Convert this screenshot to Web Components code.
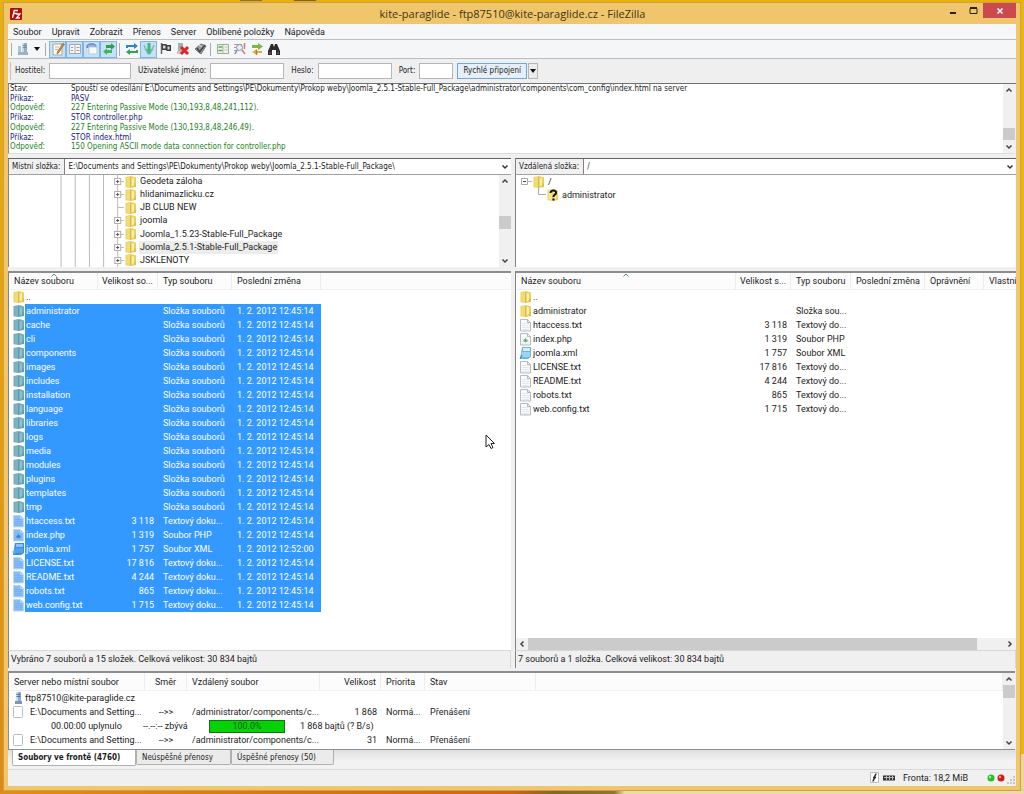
<!DOCTYPE html>
<html lang="cs">
<head>
<meta charset="utf-8">
<title>kite-paraglide - ftp87510@kite-paraglide.cz - FileZilla</title>
<style>
  html { height: 100%; }
  body {
    margin: 0; min-height: 100vh; display: flex; overflow: hidden;
    --ui: Roboto, "Noto Sans", sans-serif;
    --dlg: "DejaVu Sans Condensed", "DejaVu Sans", sans-serif;
    --dlg-size: 8px;
    --line: #8b8d91;
    --face: #f0f0f0;
    font: 9px/14px var(--ui); color: #1c1c1c;
    background:
      linear-gradient(90deg, #0000 240px, #8a7040 240px 262px, #0000 262px 294px, #7a6038 294px 316px, #0000 316px) top / 100% 1px no-repeat,
      linear-gradient(90deg, #dc9018, #c86818 50%, #8a6430 54%, #96703c 60%, #f0d9a8 61%) bottom / 100% 3px no-repeat,
      linear-gradient(180deg, #e8b60c 95%, #ecd49c 95%) right / 4px 100% no-repeat,
      linear-gradient(180deg, #e6b010, #e2a00e 50%, #dd8a14);
  }
  fz-window { flex: 1; margin: 2px 3px 3px; }
</style>
</head>
<body>
<fz-window>
  <fz-titlebar slot="chrome">kite-paraglide - ftp87510@kite-paraglide.cz - FileZilla</fz-titlebar>
  <fz-menubar slot="chrome"></fz-menubar>
  <fz-toolbar slot="chrome"></fz-toolbar>
  <fz-quickconnect slot="chrome"></fz-quickconnect>
  <fz-log slot="log"></fz-log>
  <fz-pane slot="local" side="local"></fz-pane>
  <fz-pane slot="remote" side="remote"></fz-pane>
  <fz-queue slot="queue"></fz-queue>
  <fz-statusbar slot="queue"></fz-statusbar>
</fz-window>
<fz-pointer></fz-pointer>

<script>
const define = (name, render) => customElements.define(name, class extends HTMLElement {
  connectedCallback() {
    if (this.shadowRoot) return;
    const t = document.createElement('template');
    t.innerHTML = render(this);
    this.attachShadow({ mode: 'open' }).append(t.content.cloneNode(true));
  }
});

/* ---------- icons ---------- */
const folder = (a, b, c, d) => `<path d="M1.500 2 7 1l5 1.500V12l-5 1-5.500-.800z" fill="${a}"/><path d="M2.500 2.500 6 2v10l-3.500-.500z" fill="${b}"/><path d="M7.500 3l2.500.5V10l-2.500 1.500z" fill="${c}"/><path d="M6.700 2.500v10" stroke="${d}" stroke-width=".6"/><path d="M11 8.500v3.500" stroke="${d}" stroke-width=".6"/>`;
const page = (fill, line, ink) => `<path d="M1.500 1.500h7l3 3v8.500h-10z" fill="${fill}" stroke="${line}"/><path d="M8.500 1.500v3h3" fill="none" stroke="${line}"/><path d="M3 5.500h7M3 7.500h7M3 9.500h7M3 11.500h7" stroke="${ink}"/>`;
const ICONS = {
  logo: [12, `<rect width="12" height="12" rx="1" fill="#b30c0c"/><path d="M2.500 10 4.200 2.500H8M3.500 5.500H7M6 6h4L6.500 10H10" fill="none" stroke="#fff" stroke-width="1.300"/>`],
  folder: [14, folder('#e9d062', '#f2dc74', '#fbf0a8', '#c2a032')],
  folderSel: [14, folder('#6fa9bb', '#7fb4be', '#92c2c8', '#4a86a4')],
  folderUnknown: [14, folder('#ecd468', '#f6e58c', '#fbf0a8', '#dcc060') + `<path d="M4.500 5c0-3.500 6-3.300 5.500 0-.3 1.800-2.500 2-2.500 4M7.500 10.500v2" fill="none" stroke="#111" stroke-width="2"/>`],
  file: [14, page('#f8fafc', '#b4bac4', '#e2e8ef')],
  fileSel: [14, page('#86bbf6', '#bcd8f6', '#78b0f0')],
  php: [14, page('#f8fafc', '#b4bac4', '#edf1f5') + `<path d="M4 9 6.500 6l2.500 3-2.500 1.500z" fill="#6fb46f"/>`],
  phpSel: [14, page('#86bbf6', '#bcd8f6', '#80b5f3') + `<path d="M4 9 6.500 6l2.500 3-2.500 1.500z" fill="#3d84cf"/>`],
  xml: [14, `<path d="M3 1h9v10l-3 2H1z" fill="#6fb7de"/><path d="M4 2h7v3H4z" fill="#d8eefa"/><path d="M3 6h8v5H2z" fill="#9ad4ee"/><path d="M1 13l2-4" stroke="#2f7fae"/>`],
  xmlSel: [14, `<path d="M3 1h9v10l-3 2H1z" fill="#3a8ade"/><path d="M4 2h7v3H4z" fill="#8cc4f6"/><path d="M3 6h8v5H2z" fill="#4fa2ee"/><path d="M0 10l3-2v4z" fill="#58b8f0"/>`],
  blank: [14, `<rect x="1.500" y="1.500" width="9" height="11" rx="1" fill="#fff" stroke="#b9bcc4"/>`],
  tower: [14, `<path d="M4 1h5v9H4z" fill="#88aed2"/><path d="M4 1h2v9H4z" fill="#c9ddf0"/><path d="M4.500 3.500h4M4.500 5.500h4" stroke="#49749f"/><path d="M3 10h7v3H3z" fill="#7d97ad"/>`],
  sites: [14, `<path d="M6 1h5v10H6z" fill="#8fb2c8"/><path d="M6 1h2v10H6z" fill="#c3d9e6"/><path d="M2 4h3v6H2z" fill="#a8c6d8"/><path d="M2 10h10v3H2z" fill="#9fb2bc"/><path d="M7 3.500h4M7 5.500h4" stroke="#6a8ea8"/>`],
  note: [14, `<path d="M2 2h9v11H2z" fill="#fbf8ec" stroke="#a9a9a0"/><path d="M4 5h4M4 7.500h3" stroke="#b8bcc4"/><path d="M12 1 6.500 9.500 6 12l2-1.500L13.500 2z" fill="#c98a3c" stroke="#8a5a24" stroke-width=".5"/>`],
  split: [14, `<path d="M1.500 2.500h11v9h-11z" fill="#f4f4f2" stroke="#a4a8b0"/><path d="M7 3v8" stroke="#a4a8b0"/><path d="M3 5.500h2M3 8.500h2" stroke="#8f9aa8"/><path d="M8.500 5.500h3M8.500 8.500h3" stroke="#d88a70"/>`],
  fold: [14, `<path d="M2 6V4c0-3 9-3 9 0v2" fill="#8aaede" stroke="#4a78b8"/><path d="M4 5h8v7H4z" fill="#f6f8fa" stroke="#c0c8d4"/>`],
  queue: [14, `<path d="M4 3h5V1l4 3.500L9 8V6H4z" fill="#2ea24a"/><path d="M10 8H5V6.500L1 9.500 5 13v-2h5z" fill="#3fb85c"/>`],
  refresh: [14, `<path d="M1 6V3h8V1l4 3-4 3V5H3v1z" fill="#2a86c8"/><path d="M13 8v3H5v2L1 10l4-3v2h6V8z" fill="#2fa54e"/>`],
  process: [14, `<path d="M5.500 1h3v6h3L7 13 2.500 7h3z" fill="#45b87a"/><path d="M2 3l4 9M12 3 8 12" stroke="#7bc0a8" stroke-width="1.500"/>`],
  flag: [14, `<path d="M2.500 1v11" stroke="#666" stroke-width="1.500"/><path d="M3 2h4l1 1h4v6H8L7 8H3z" fill="#3b3b3b"/><path d="M4 3.500h2.500v3H4zM8.500 4.500h2v3h-2z" fill="#d8d8d8"/>`],
  cancel: [14, `<path d="M2 1h5v8H2z" fill="#a4aeb6"/><path d="M1 9h6v3H1z" fill="#c0c6cc"/><path d="M5 5l7 7M12 5l-7 7" stroke="#dc2626" stroke-width="3"/>`],
  verify: [14, `<path d="M2 7 8 2l5 2-5 8z" fill="#9b9b9b" stroke="#777"/><path d="M4 6l2.500 4L12 3" fill="none" stroke="#444" stroke-width="1.500"/><path d="M6 3.500l3 1" stroke="#ddd"/>`],
  compare: [14, `<path d="M1.500 2.500h11v9h-11z" fill="#eef4ea" stroke="#9caa98"/><path d="M7 3v8" stroke="#b4c0b0"/><path d="M2.500 5h4M2.500 8.500h4" stroke="#4fb05a" stroke-width="1.500"/><path d="M8.500 5h3M8.500 8h3" stroke="#b8c8b4"/>`],
  filter: [14, `<path d="M1 2.500h8M1 5.500h3M1 8.500h3" stroke="#c09090"/><circle cx="6.500" cy="5.500" r="3" fill="#e8eef6" stroke="#8496aa"/><path d="M4 8l-2 4" stroke="#889" stroke-width="1.500"/><path d="M11.500 1v6M9 8l3 4" stroke="#d87a7a" stroke-width="1.500"/>`],
  sync: [14, `<path d="M2 3h6V1l5 3.500L8 8V6H2z" fill="#7ab648"/><path d="M12 9H7V7L2 10l5 3v-2h5z" fill="#e0b23c"/><path d="M6.500 8v5" stroke="#c07a3a" stroke-width="1.500"/>`],
  find: [14, `<path d="M4 2h2l1 3 1-3h2l3 7v4H9V8H5v5H1V9z" fill="#2b2b2b"/><path d="M2 10h2v2H2zM10 10h2v2h-2z" fill="#8b3b3b"/>`],
};
define('fz-icon', el => {
  const [box, art] = ICONS[el.getAttribute('name')];
  return `<style>:host{display:inline-block;width:${box}px;height:${box}px;flex:none}svg{display:block;width:100%;height:100%}</style>
  <svg viewBox="0 0 ${box} ${box}" aria-hidden="true">${art}</svg>`;
});

/* ---------- frame ---------- */
define('fz-window', () => `<style>
  :host{display:flex;flex-direction:column;box-sizing:border-box;background:#f0c66c;border:1px solid #cf9f40;padding:0 4px 4px;min-width:0}
  .client{flex:1;display:flex;flex-direction:column;min-height:0;background:var(--face)}
  .panes{flex:1;display:grid;grid-template-columns:503fr 501fr;gap:4px;min-height:0}
  ::slotted([slot=local]),::slotted([slot=remote]){min-width:0;min-height:0}
</style>
<slot name="chrome"></slot>
<div class="client"><slot name="log"></slot>
  <div class="panes"><slot name="local"></slot><slot name="remote"></slot></div>
  <slot name="queue"></slot></div>`);

define('fz-titlebar', () => `<style>
  :host{display:flex;align-items:center;height:21px;font-family:"Open Sans","Noto Sans",sans-serif;font-size:11px;color:#3f3313}
  fz-icon{margin-left:2px}
  h1{flex:1;margin:0;font:inherit;text-align:center;padding-left:60px}
  .ctl{display:flex;align-self:flex-start}
  button{all:unset;width:20px;height:15px;display:grid;place-items:center}
  button svg{display:block}
  .close{width:33px;background:#cb4a4e}
</style>
<fz-icon name="logo"></fz-icon><h1><slot></slot></h1>
<div class="ctl">
  <button aria-label="Minimalizovat"><svg width="8" height="8"><path d="M1 6h6" stroke="#2a2008" stroke-width="2"/></svg></button>
  <button aria-label="Maximalizovat"><svg width="9" height="8"><path d="M1 1.500h7v5H1z" fill="none" stroke="#2a2008"/><path d="M1 1h7" stroke="#2a2008" stroke-width="2"/></svg></button>
  <button class="close" aria-label="Zavřít"><svg width="8" height="8"><path d="M1.500 1.500l5 5M6.500 1.500l-5 5" stroke="#fff" stroke-width="1.500"/></svg></button>
</div>`);

define('fz-menubar', () => `<style>
  :host{display:flex;gap:10px;height:15px;padding-left:5px;background:#f6f7f9;border-bottom:1px solid #b9bec4}
  button{all:unset;line-height:16px}
</style>` + ['Soubor','Upravit','Zobrazit','Přenos','Server','Oblíbené položky','Nápověda'].map(t => `<button>${t}</button>`).join(''));

define('fz-toolbar', () => {
  const b = (name, label, on) => `<button aria-label="${label}"${on ? ' class="on" aria-pressed="true"' : ''}><fz-icon name="${name}"></fz-icon></button>`;
  return `<style>
  :host{display:flex;align-items:center;height:18px;padding-left:3px;background:#f5f6f8;border-bottom:1px solid #b9bec4}
  button{all:unset;box-sizing:border-box;width:17px;height:17px;display:grid;place-items:center}
  .on{background:#c6e0f7;border:1px solid #7fb4e4}
  i{width:1px;height:13px;background:#a8abb0;margin:0 2px 0 0}
  i.s{margin:0 3px 0 2px}
  .drop{width:12px}
</style><i></i>${b('sites','Správce míst')}
<button class="drop" aria-label="Místa"><svg width="7" height="4"><path d="M0 0h6L3 4z" fill="#111"/></svg></button>
<i class="s"></i>
${b('note','Protokol',1)}${b('split','Místní strom',1)}${b('fold','Vzdálený strom',1)}${b('queue','Fronta',1)}<i class="s"></i>
${b('refresh','Obnovit')}${b('process','Zpracovat frontu',1)}${b('flag','Zrušit')}${b('cancel','Odpojit')}${b('verify','Připojit znovu')}<i class="s"></i>
${b('compare','Porovnat')}${b('filter','Filtr')}${b('sync','Synchronizovat')}${b('find','Hledat')}`;
});

define('fz-quickconnect', () => `<style>
  :host{display:flex;align-items:center;height:24px;background:#efefef;border-bottom:1px solid #707276;font-family:var(--dlg);font-size:var(--dlg-size)}
  form{display:flex;align-items:center;padding-left:2px}
  form::before{content:"";width:1px;height:18px;background:#c4c4c4;margin-right:4px}
  label{margin-right:4px}
  input{box-sizing:border-box;height:16px;width:74px;margin:0 7px 0 0;border:1px solid #b4b6ba;background:#fff;padding:0 2px;font:inherit}
  #host{width:82px} #port{width:34px;margin-right:4px}
  button{box-sizing:border-box;height:16px;margin:0;padding:0;border:1px solid #6fa8dc;background:#e6eff8;font:inherit;color:inherit;width:70px}
  .more{width:10px;margin-left:1px;border-color:#b4b6ba;background:#ececec;display:grid;place-items:center}
</style><form onsubmit="return false">
<label for="host">Hostitel:</label><input id="host">
<label for="user">Uživatelské jméno:</label><input id="user">
<label for="pass">Heslo:</label><input id="pass" type="password">
<label for="port">Port:</label><input id="port">
<button>Rychlé připojení</button><button type="button" class="more" aria-label="Historie"><svg width="6" height="4"><path d="M0 0h6L3 4z" fill="#111"/></svg></button></form>`);

/* ---------- scroll bar ---------- */
define('fz-scrollbar', el => {
  const horizontal = el.hasAttribute('horizontal');
  const [before, thumb, after] = el.getAttribute('parts').split(' ');
  return `<style>
  :host{display:flex;flex-direction:${horizontal ? 'row' : 'column'};flex:none;${horizontal ? 'height' : 'width'}:12px;background:#f0f0f0;align-items:stretch}
  .end{flex:0 0 12px;display:grid;place-items:center}
  .track{flex:1;display:grid;grid-template-${horizontal ? 'columns' : 'rows'}:${before}fr ${thumb}fr ${after}fr;min-height:0}
  b{grid-${horizontal ? 'column' : 'row'}:2;background:#cbcbcb}
  svg{transform:rotate(${horizontal ? -90 : 0}deg)}
</style>
<span class="end"><svg width="8" height="6"><path d="M1.500 4.500 4 2l2.500 2.500" fill="none" stroke="#444" stroke-width="1.500"/></svg></span>
<span class="track"><b></b></span>
<span class="end"><svg width="8" height="6"><path d="M1.500 1.500 4 4l2.500-2.500" fill="none" stroke="#444" stroke-width="1.500"/></svg></span>`;
});

/* ---------- message log ---------- */
define('fz-log', () => {
  const rows = [
    ['s','Stav:','Spouští se odesílání E:\\Documents and Settings\\PE\\Dokumenty\\Prokop weby\\Joomla_2.5.1-Stable-Full_Package\\administrator\\components\\com_config\\index.html na server'],
    ['c','Příkaz:','PASV'],
    ['r','Odpověď:','227 Entering Passive Mode (130,193,8,48,241,112).'],
    ['c','Příkaz:','STOR controller.php'],
    ['r','Odpověď:','227 Entering Passive Mode (130,193,8,48,246,49).'],
    ['c','Příkaz:','STOR index.html'],
    ['r','Odpověď:','150 Opening ASCII mode data connection for controller.php']];
  return `<style>
  :host{display:flex;height:69px;background:#fff;border-left:1px solid var(--line);border-bottom:1px solid #dcdcdc;margin:0 1px 4px 0;font-family:var(--dlg);font-size:var(--dlg-size)}
  .rows{flex:1;display:grid;grid-auto-rows:1fr;min-width:0;padding-left:1px}
  .rows div{display:flex;line-height:10px;white-space:nowrap;min-height:0}
  dt{width:61px;flex:none} dl{margin:0 0 1px} dd{margin:0}
  .c{color:#1a1a7c} .r{color:#1c7f1c}
</style><dl class="rows">${rows.map(([k, a, b]) => `<div class="${k}"><dt>${a}</dt><dd>${b}</dd></div>`).join('')}</dl>
<fz-scrollbar parts="32 12 1"></fz-scrollbar>`;
});

/* ---------- path bar ---------- */
define('fz-pathbar', el => `<style>
  :host{display:flex;height:15px;font-family:var(--dlg);font-size:var(--dlg-size);border-top:1px solid #606266;border-bottom:1px solid #a0a0a0;background:#fff}
  label{padding:0 4px 0 3px;background:var(--face);border-right:1px solid #808080;line-height:15px}
  .box{flex:1;display:flex;align-items:center;min-width:0}
  select{appearance:none;flex:1;min-width:0;border:0;background:none;margin:0;padding:0 0 0 3px;font:inherit;color:inherit;height:15px}
  svg{flex:none;margin-right:2px}
</style><label for="path">${el.getAttribute('label')}</label>
<span class="box"><select id="path"><option>${el.getAttribute('path')}</option></select>
<svg width="8" height="6"><path d="M1.500 1.500 4 4l2.500-2.500" fill="none" stroke="#333" stroke-width="1.500"/></svg></span>`);

/* ---------- directory trees ---------- */
define('fz-local-tree', () => {
  const rows = [['Geodeta záloha',1],['hlidanimazlicku.cz',1],['JB CLUB NEW',0],['joomla',1],['Joomla_1.5.23-Stable-Full_Package',1],['Joomla_2.5.1-Stable-Full_Package',1,1],['JSKLENOTY',1]];
  return `<style>
  :host{display:flex;background:#fff;height:92px}
  ul{flex:1;list-style:none;margin:0;padding:0;display:grid;grid-auto-rows:1fr;min-width:0}
  li{display:flex;align-items:center;line-height:13px;white-space:nowrap;min-height:0}
  svg{flex:none;align-self:stretch;height:auto;width:114px}
  span{margin-left:1px;padding:0 1px}
  .cur{background:#ececec}
</style><ul>${rows.map(([t, plus, cur]) => `<li><svg viewBox="0 0 114 13" preserveAspectRatio="xMinYMid slice"><path d="M50.500-1v16M64.500-1v16M78.500-1v16M92.500-1v16M106.500-1v16M107 6.500h7" stroke="#bcbcbc"/>${plus ? '<path d="M103.500 3.500h6v6h-6z" fill="#fff" stroke="#b0b0b0"/><path d="M105 6.500h3M106.500 5v3" stroke="#555"/>' : ''}</svg><fz-icon name="folder"></fz-icon><span${cur ? ' class="cur"' : ''}>${t}</span></li>`).join('')}</ul>
<fz-scrollbar parts="29 13 26"></fz-scrollbar>`;
});
define('fz-remote-tree', () => `<style>
  :host{display:block;background:#fff;height:92px}
  ul{list-style:none;margin:0;padding:0}
  li{display:flex;align-items:center;height:13px}
  svg{flex:none}
  span{margin-left:2px}
</style><ul>
<li><svg width="15" height="13"><path d="M8 6.500h7" stroke="#b4b4b4"/><path d="M4.500 3.500h6v6h-6z" fill="#fff" stroke="#a8a8a8"/><path d="M6 6.500h3" stroke="#444"/></svg><fz-icon name="folder"></fz-icon><span>/</span></li>
<li><svg width="29" height="13"><path d="M21.500 0v6.500H29" fill="none" stroke="#a8a8a8"/></svg><fz-icon name="folderUnknown"></fz-icon><span>administrator</span></li></ul>`);

/* ---------- file lists ---------- */
const FILES = [['htaccess.txt','3 118','Textový do','file'],['index.php','1 319','Soubor PHP','php'],['joomla.xml','1 757','Soubor XML','xml'],['LICENSE.txt','17 816','Textový do','file'],['README.txt','4 244','Textový do','file'],['robots.txt','865','Textový do','file'],['web.config.txt','1 715','Textový do','file']];
define('fz-filelist', el => {
  const local = el.getAttribute('side') === 'local';
  const heads = local ? ['Název souboru','Velikost so...','Typ souboru','Poslední změna',''] : ['Název souboru','Velikost s...','Typ souboru','Poslední změna','Oprávnění','Vlastní'];
  const widths = local ? [15,73,60,74,89,0] : [15,204,55,60,74,59,0];
  const rows = local
    ? [...['administrator','cache','cli','components','images','includes','installation','language','libraries','logs','media','modules','plugins','templates','tmp'].map(n => [n,'','Složka souborů','folder','1. 2. 2012 12:45:14']),
       ...FILES.map(([n, s, t, i]) => [n, s, t === 'Textový do' ? 'Textový doku...' : t, i, n === 'joomla.xml' ? '1. 2. 2012 12:52:00' : '1. 2. 2012 12:45:14'])]
    : [['administrator','','Složka sou...','folder',''], ...FILES.map(([n, s, t, i]) => [n, s, t === 'Textový do' ? t + '...' : t, i, ''])];
  return `<style>
  :host{display:block;background:#fff;overflow:hidden;border-top:2px solid var(--line)}
  table{width:100%;table-layout:fixed;border-collapse:separate;border-spacing:0}
  th,td{padding:0 0 0 5px;font-weight:400;text-align:left;white-space:nowrap;overflow:hidden;height:14px;line-height:14px}
  thead th{height:17px;background:#fcfcfc;border-right:1px solid #ececec;border-bottom:1px solid #f0f0f0;box-sizing:border-box}
  th:last-child{border-right:0}
  th:first-child{padding-left:4px;background:#fcfcfc url("data:image/svg+xml,%3Csvg xmlns=%27http://www.w3.org/2000/svg%27 width=%276%27 height=%274%27%3E%3Cpath d=%27M.5 3.500 3 1l2.500 2.500%27 fill=%27none%27 stroke=%27%235a8a7a%27/%3E%3C/svg%3E") no-repeat center top}
  .n{text-align:right;padding:0 4px 0 0}
  td.i{padding:0 0 0 2px}
  td.i fz-icon{display:block}
  td.name{padding-left:1px}
  .sel td{color:#fff}
  .sel td:not(.i){background:#3399ff}
</style><table><colgroup>${widths.map(w => `<col${w ? ` style="width:${w}px"` : ''}>`).join('')}</colgroup>
<thead><tr>${heads.map((h, i) => `<th${i ? '' : ' colspan="2"'}${i === 1 ? ' class="n"' : ''}>${h}</th>`).join('')}</tr></thead>
<tbody><tr><td class="i"><fz-icon name="folder"></fz-icon></td><td class="name">..</td></tr>
${rows.map(([n, s, t, i, d]) => `<tr${local ? ' class="sel"' : ''}><td class="i"><fz-icon name="${i}${local ? 'Sel' : ''}"></fz-icon></td><td class="name">${n}</td><td class="n">${s}</td><td>${t}</td><td>${d}</td></tr>`).join('')}
</tbody></table>`;
});

define('fz-pane', el => {
  const local = el.getAttribute('side') === 'local';
  return `<style>
  :host{display:flex;flex-direction:column}
  fz-pathbar,.tree,.list,footer{border-left:1px solid #808286}
  .tree{padding-left:1px;background:#fff;margin-bottom:4px}
  .list{flex:1;display:flex;flex-direction:column;min-height:0;background:#fff}
  fz-filelist{flex:1;padding-left:1px;min-height:0}
  footer{height:17px;line-height:17px;padding-left:2px;border-top:1px solid #d8d8d8;background:var(--face);margin-bottom:3px;border-right:1px solid #d8d8d8}
</style>
<fz-pathbar label="${local ? 'Místní složka:' : 'Vzdálená složka:'}" path="${local ? 'E:\\Documents and Settings\\PE\\Dokumenty\\Prokop weby\\Joomla_2.5.1-Stable-Full_Package\\' : '/'}"></fz-pathbar>
<div class="tree">${local ? '<fz-local-tree></fz-local-tree>' : '<fz-remote-tree></fz-remote-tree>'}</div>
<div class="list"><fz-filelist side="${local ? 'local' : 'remote'}"></fz-filelist>${local ? '' : '<fz-scrollbar horizontal parts="0 447 27"></fz-scrollbar>'}</div>
<footer>${local ? 'Vybráno 7 souborů a 15 složek. Celková velikost: 30 834 bajtů' : '7 souborů a 1 složka. Celková velikost: 30 834 bajtů'}</footer>`;
});

/* ---------- transfer queue ---------- */
define('fz-queue', () => {
  const item = size => `<tr><td class="f"><fz-icon name="blank"></fz-icon>E:\\Documents and Setting...</td><td class="m">--&gt;&gt;</td><td>/administrator/components/c...</td><td class="n">${size}</td><td>Normá...</td><td>Přenášení</td><td></td></tr>`;
  return `<style>
  :host{display:block}
  .view{display:flex;background:#fff;border:1px solid var(--line);border-top:2px solid var(--line);border-right:0;margin-right:1px;overflow:hidden;box-sizing:border-box;height:79px}
  .scroll{flex:1;overflow:hidden;min-width:0}
  table{width:100%;table-layout:fixed;border-spacing:0}
  th,td{padding:0 0 0 5px;font-weight:400;text-align:left;white-space:nowrap;overflow:hidden;height:14px;line-height:14px}
  th{height:18px;box-sizing:border-box;background:#fcfcfc;border-right:1px solid #ececec;border-bottom:1px solid #f0f0f0}
  .m{text-align:center;padding:0} .n{text-align:right;padding:0 4px 0 0}
  td.f{padding-left:3px}
  td.f fz-icon{vertical-align:top;margin-right:4px} td.s fz-icon{vertical-align:top;margin-right:-1px}
  .run{display:grid;grid-template-columns:92px 66px 76px auto;align-items:center;padding-left:37px}
  .bar{box-sizing:border-box;height:13px;border:1px solid #1c6a1c;background:#06d306;color:#0c5a0c;text-align:center;line-height:11px}
  .run :last-child{padding-left:15px}
  .tabs{display:flex;height:19px;padding-left:4px;background:linear-gradient(#e0e0e0,#f2f2f2 60%);font-family:var(--dlg);font-size:var(--dlg-size)}
  .tabs button{all:unset;box-sizing:border-box;height:15px;line-height:16px;padding-left:5px;background:#ebebeb;border:1px solid #b0b0b0;border-top:0;border-radius:0 0 2px 2px;width:103px}
  .tabs .on{width:124px;background:#fff;font-weight:700;height:16px}
  .tabs .mid{width:95px}
</style>
<div class="view"><div class="scroll"><table>
<colgroup><col style="width:136px"><col style="width:42px"><col style="width:133px"><col style="width:61px"><col style="width:44px"><col style="width:111px"><col></colgroup>
<thead><tr><th>Server nebo místní soubor</th><th class="m">Směr</th><th>Vzdálený soubor</th><th class="n">Velikost</th><th>Priorita</th><th>Stav</th><th></th></tr></thead>
<tbody><tr><td class="f s" colspan="7"><fz-icon name="tower"></fz-icon>ftp87510@kite-paraglide.cz</td></tr>
${item('1 868')}
<tr><td colspan="7"><div class="run"><span>00.00:00 uplynulo</span><span>--.--:-- zbývá</span><div class="bar" role="progressbar" aria-valuenow="100">100.0%</div><span>1 868 bajtů (? B/s)</span></div></td></tr>
${item('31')}</tbody></table></div><fz-scrollbar parts="0 13 40"></fz-scrollbar></div>
<div class="tabs" role="tablist"><button class="on" role="tab" aria-selected="true">Soubory ve frontě (4760)</button><button class="mid" role="tab">Neúspěšné přenosy</button><button role="tab">Úspěšné přenosy (50)</button></div>`;
});

define('fz-statusbar', () => `<style>
  :host{display:flex;align-items:center;justify-content:flex-end;height:16px;border-top:1px solid #d8d8d8;background:var(--face)}
  svg{flex:none} span{margin:0 19px 0 6px}
</style>
<svg width="28" height="12"><path d="M1.500.500h8v10h-8z" fill="#fff" stroke="#bbb"/><path d="M7.500 2C5 2 6 9 3.500 9M4 5.500h3" fill="none" stroke="#222" stroke-width="1.300"/><path d="M14 3.500h12v5H14z" fill="#333"/><path d="M15 5.500h10M17.500 4v4M20.500 4v4M23.500 4v4" stroke="#bbb"/></svg>
<span>Fronta: 18,2 MiB</span>
<svg width="29" height="14"><circle cx="4" cy="7" r="3.500" fill="#27c227"/><circle cx="3" cy="6" r="1.200" fill="#a8f0a8"/><circle cx="14" cy="7" r="3.500" fill="#d01c1c"/><circle cx="13" cy="6" r="1.200" fill="#f4a0a0"/><path d="M26 6h2M26 9h2M26 12h2M23 9h2M23 12h2M20 12h2" stroke="#bbb" stroke-width="1.500"/></svg>`);

/* mouse pointer, floating over the window */
define('fz-pointer', () => `<style>:host{position:absolute;left:485px;top:434px;pointer-events:none}svg{display:block}</style>
<svg width="11" height="16"><path d="M1 1v12l3-2.500 2 4 2-1-2-4h3.500z" fill="#fff" stroke="#222"/></svg>`);
</script>
</body>
</html>
